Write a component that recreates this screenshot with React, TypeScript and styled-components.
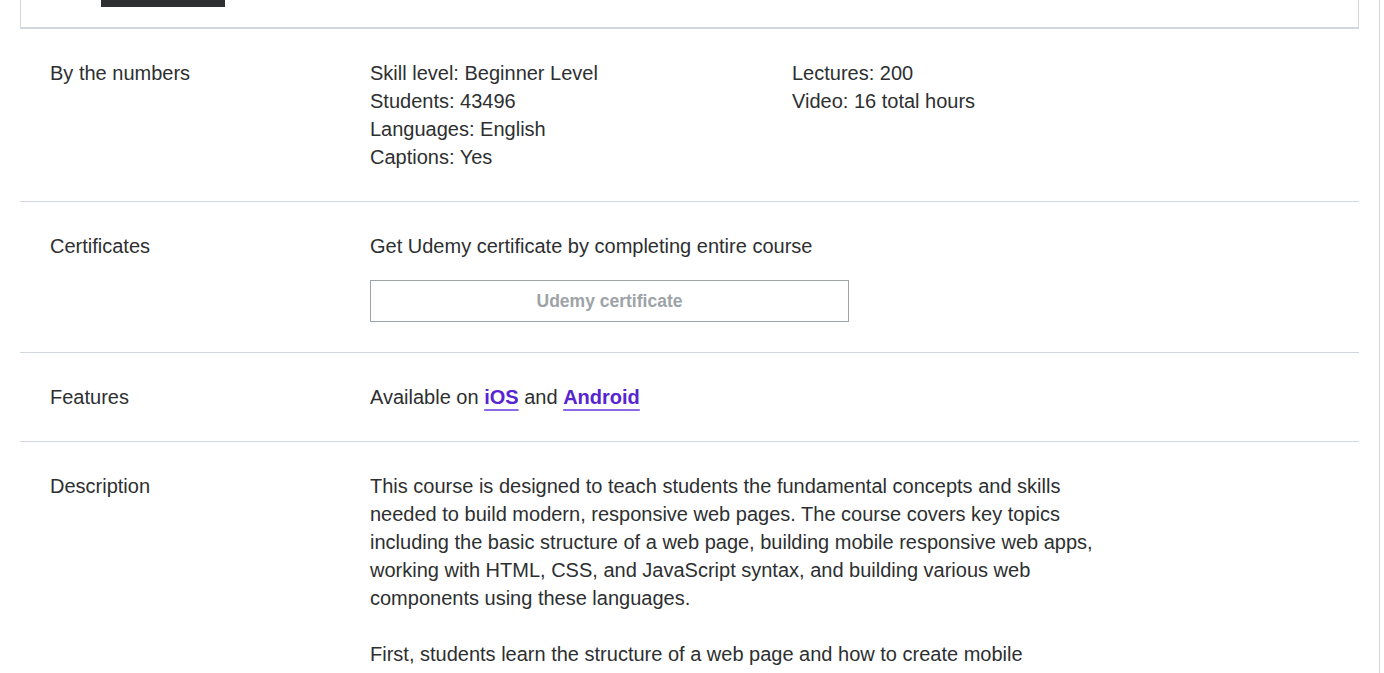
import React from "react";
import styled, { createGlobalStyle } from "styled-components";

const Global = createGlobalStyle`
  html, body { margin: 0; padding: 0; background: #ffffff; }
  body {
    font-family: "Liberation Sans", Arial, sans-serif;
    color: #2d2f31;
    font-size: 20px;
    line-height: 28px;
  }
`;

const Page = styled.div`
  display: flex;
  min-height: 673px;
`;

const Main = styled.main`
  flex: 1;
  padding: 0 20px;
`;

const Sidebar = styled.aside`
  width: 4px;
  border-left: 1px solid #d1d7dc;
`;

const TopBox = styled.div`
  height: 27px;
  border: 1px solid #d1d7dc;
  border-top: none;
  border-bottom: 2px solid #d1d7dc;
  display: flex;
  align-items: flex-start;
`;

const DarkBar = styled.div`
  margin-left: 80px;
  width: 124px;
  height: 7px;
  background: #2d2f31;
`;

const Row = styled.section<{ $last?: boolean }>`
  display: grid;
  grid-template-columns: 320px 1fr;
  padding: 30px 30px;
  border-bottom: ${(p) => (p.$last ? "none" : "1px solid #d1d7dc")};
`;

const Label = styled.div`
  font-size: 20px;
  line-height: 28px;
`;

const Content = styled.div`
  display: flex;
  flex-direction: column;
`;

const Columns = styled.div`
  display: grid;
  grid-template-columns: 422px 1fr;
`;

const Line = styled.div`
  line-height: 28px;
`;

const CertButton = styled.button`
  margin-top: 20px;
  width: 479px;
  height: 42px;
  border: 1px solid #9da3a7;
  background: #ffffff;
  color: #9da3a7;
  font-family: "Liberation Sans", Arial, sans-serif;
  font-weight: 700;
  font-size: 17.5px;
  cursor: not-allowed;
`;

const Link = styled.a`
  color: #5624d0;
  font-weight: 700;
  text-decoration: underline;
  text-decoration-color: #8c6ae6;
  text-underline-offset: 5px;
  text-decoration-thickness: 2px;
`;

const Description = styled.div`
  max-width: 740px;
  p {
    margin: 0 0 28px 0;
  }
`;

export default function App() {
  return (
    <>
      <Global />
      <Page>
        <Main>
          <TopBox>
            <DarkBar />
          </TopBox>
          <Row>
            <Label>By the numbers</Label>
            <Columns>
              <div>
                <Line>Skill level: Beginner Level</Line>
                <Line>Students: 43496</Line>
                <Line>Languages: English</Line>
                <Line>Captions: Yes</Line>
              </div>
              <div>
                <Line>Lectures: 200</Line>
                <Line>Video: 16 total hours</Line>
              </div>
            </Columns>
          </Row>
          <Row>
            <Label>Certificates</Label>
            <Content>
              <Line>Get Udemy certificate by completing entire course</Line>
              <div>
                <CertButton disabled>Udemy certificate</CertButton>
              </div>
            </Content>
          </Row>
          <Row>
            <Label>Features</Label>
            <Content>
              <Line>
                Available on <Link href="#">iOS</Link> and{" "}
                <Link href="#">Android</Link>
              </Line>
            </Content>
          </Row>
          <Row $last>
            <Label>Description</Label>
            <Description>
              <p>
                This course is designed to teach students the fundamental
                concepts and skills needed to build modern, responsive web
                pages. The course covers key topics including the basic
                structure of a web page, building mobile responsive web apps,
                working with HTML, CSS, and JavaScript syntax, and building
                various web components using these languages.
              </p>
              <p>
                First, students learn the structure of a web page and how to
                create mobile responsive layouts, then move on to styling pages
                with CSS and adding interactivity with JavaScript.
              </p>
            </Description>
          </Row>
        </Main>
        <Sidebar />
      </Page>
    </>
  );
}
